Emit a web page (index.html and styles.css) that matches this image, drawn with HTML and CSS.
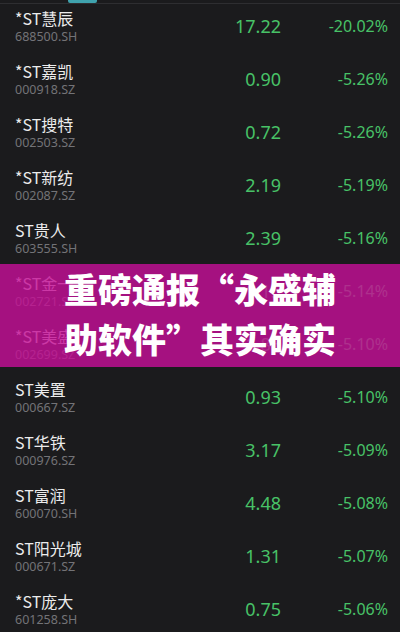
FILE: index.html
```html
<!DOCTYPE html>
<html>
<head>
<meta charset="utf-8">
<link rel="stylesheet" href="styles.css">
</head>
<body>
<div class="page">
  <div class="tabbar"><div class="indicator"></div></div>
  <div class="list">
    <div class="row"><div class="info"><div class="name">*ST慧辰</div><div class="code">688500.SH</div></div><div class="price">17.22</div><div class="pct">-20.02%</div></div>
    <div class="row"><div class="info"><div class="name">*ST嘉凯</div><div class="code">000918.SZ</div></div><div class="price">0.90</div><div class="pct">-5.26%</div></div>
    <div class="row"><div class="info"><div class="name">*ST搜特</div><div class="code">002503.SZ</div></div><div class="price">0.72</div><div class="pct">-5.26%</div></div>
    <div class="row"><div class="info"><div class="name">*ST新纺</div><div class="code">002087.SZ</div></div><div class="price">2.19</div><div class="pct">-5.19%</div></div>
    <div class="row"><div class="info"><div class="name">ST贵人</div><div class="code">603555.SH</div></div><div class="price">2.39</div><div class="pct">-5.16%</div></div>
    <div class="row"><div class="info"><div class="name">*ST金一</div><div class="code">002721.SZ</div></div><div class="price">1.15</div><div class="pct">-5.14%</div></div>
    <div class="row"><div class="info"><div class="name">*ST美盛</div><div class="code">002699.SZ</div></div><div class="price">1.86</div><div class="pct">-5.10%</div></div>
    <div class="row"><div class="info"><div class="name">ST美置</div><div class="code">000667.SZ</div></div><div class="price">0.93</div><div class="pct">-5.10%</div></div>
    <div class="row"><div class="info"><div class="name">ST华铁</div><div class="code">000976.SZ</div></div><div class="price">3.17</div><div class="pct">-5.09%</div></div>
    <div class="row"><div class="info"><div class="name">ST富润</div><div class="code">600070.SH</div></div><div class="price">4.48</div><div class="pct">-5.08%</div></div>
    <div class="row"><div class="info"><div class="name">ST阳光城</div><div class="code">000671.SZ</div></div><div class="price">1.31</div><div class="pct">-5.07%</div></div>
    <div class="row"><div class="info"><div class="name">*ST庞大</div><div class="code">601258.SH</div></div><div class="price">0.75</div><div class="pct">-5.06%</div></div>
  </div>
  <div class="banner"><div class="headline">重磅通报“永盛辅<br>助软件”其实确实</div></div>
</div>
</body>
</html>
```
FILE: styles.css
```css
html, body {
  margin: 0;
  padding: 0;
  background: #1b1b1d;
}
.page {
  position: relative;
  width: 400px;
  height: 632px;
  overflow: hidden;
  background: #1b1b1d;
  font-family: "Noto Sans", "Noto Sans CJK SC", sans-serif;
}
.tabbar {
  height: 3px;
  border-bottom: 1px solid #2e2e31;
  position: relative;
}
.indicator {
  position: absolute;
  left: 68px;
  top: 0;
  width: 29px;
  height: 3px;
  background: #3fa2ad;
  border-radius: 0 0 2px 2px;
}
.list {
  display: flex;
  flex-direction: column;
}
.row {
  height: 53px;
  box-sizing: border-box;
  padding: 3px 12px 0 15px;
  display: flex;
  align-items: flex-start;
}
.info {
  flex: 1;
  display: flex;
  flex-direction: column;
}
.name {
  font-family: "Noto Sans CJK SC", sans-serif;
  font-size: 16px;
  line-height: 22px;
  color: #ececec;
}
.code {
  font-size: 12.5px;
  line-height: 16px;
  color: #737377;
}
.price {
  width: 90px;
  text-align: right;
  font-size: 18px;
  line-height: 24px;
  margin-top: 7px;
  color: #48c267;
}
.pct {
  width: 107px;
  text-align: right;
  font-size: 16px;
  line-height: 24px;
  margin-top: 7px;
  color: #48c267;
}
.banner {
  position: absolute;
  left: 0;
  top: 264px;
  width: 400px;
  height: 103px;
  background: rgba(196, 16, 150, 0.82);
  display: flex;
  justify-content: center;
}
.headline {
  font-family: "Noto Sans CJK SC", sans-serif;
  font-weight: 900;
  font-size: 34px;
  line-height: 50px;
  color: #ffffff;
  text-align: left;
}
```
